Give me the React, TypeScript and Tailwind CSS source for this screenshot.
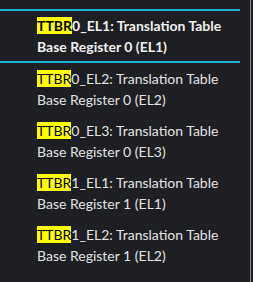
import React from "react";

const items = [
  { reg: "0_EL1", l2: "Base Register 0 (EL1)", sel: true },
  { reg: "0_EL2", l2: "Base Register 0 (EL2)", sel: false },
  { reg: "0_EL3", l2: "Base Register 0 (EL3)", sel: false },
  { reg: "1_EL1", l2: "Base Register 1 (EL1)", sel: false },
  { reg: "1_EL2", l2: "Base Register 1 (EL2)", sel: false },
];

export default function App() {
  return (
    <div
      className="w-[253px] h-[282px] bg-[#1e1f22] overflow-hidden flex"
      style={{ fontFamily: "Lato, 'Open Sans', sans-serif" }}
    >
      <div className="w-[240px] flex flex-col shrink-0">
        <div className="h-[9px] overflow-hidden flex flex-col justify-end shrink-0">
          <div className="pl-[37px] pb-[7px] text-[14px] leading-[21px] text-[#dcdcdc] whitespace-nowrap">
            Register (EL1)
          </div>
        </div>
        {items.map((it) => (
          <div
            key={it.reg}
            className={
              it.sel
                ? "border-y-2 border-[#1fb2d6] py-[4px] pl-[37px] text-[14px] leading-[21px] text-[#f0f0f0] font-bold shrink-0"
                : "py-[5px] pl-[37px] text-[14px] leading-[21px] text-[#e2e2e2] shrink-0"
            }
          >
            <div className="whitespace-nowrap">
              <span className="bg-[#ffff00] text-black">TTBR</span>
              {it.reg}: Translation Table
            </div>
            <div className="whitespace-nowrap">{it.l2}</div>
          </div>
        ))}
      </div>
      <div className="w-[10px] shrink-0" />
      <div className="w-px h-full bg-[#8c8c8c] shrink-0" />
    </div>
  );
}
